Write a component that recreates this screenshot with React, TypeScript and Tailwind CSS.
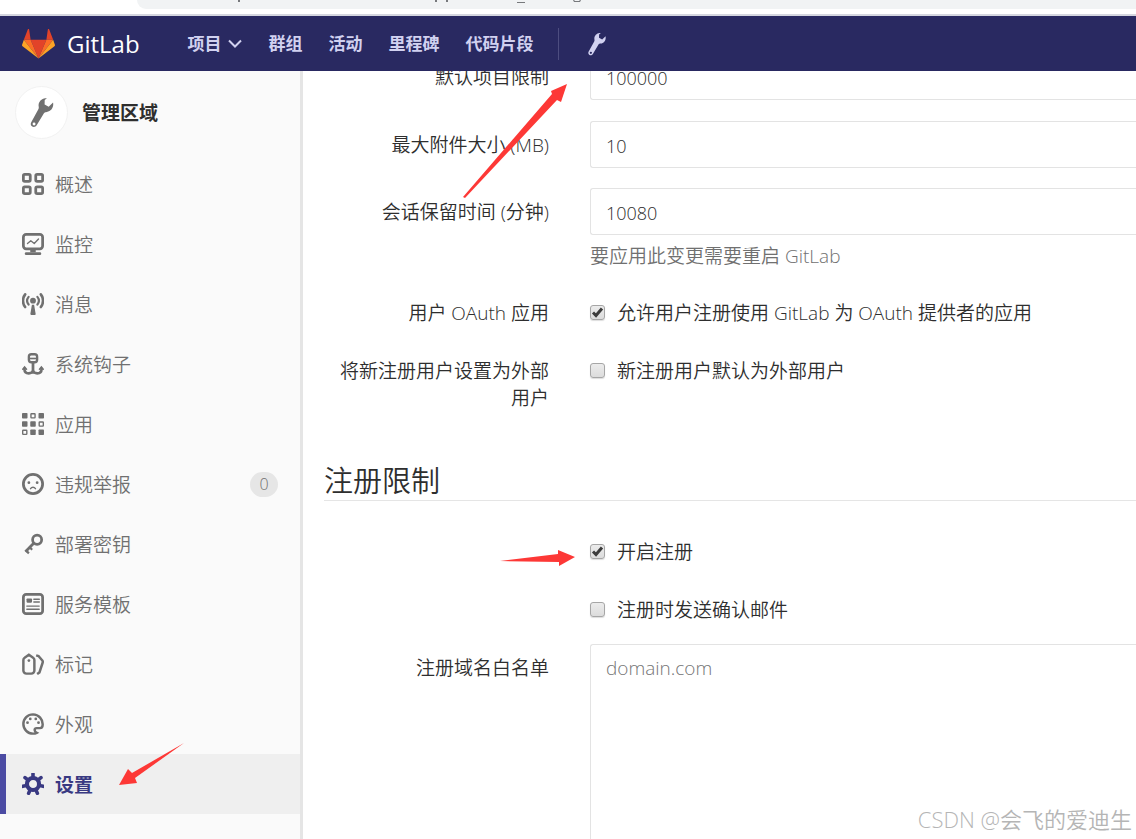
import type { ReactNode } from "react";

interface NavItem {
  label: string;
  icon: ReactNode;
  count?: number;
  active?: boolean;
}

const Wrench = ({ className }: { className: string }) => (
  <svg viewBox="0 0 24 32" className={className} fill="currentColor" aria-hidden="true">
    <path
      fillRule="evenodd"
      d="M15.500 1.200C11.200 1.600 8.100 5.200 8.500 9.400c.2 1.500.4 2.200-.4 3.600L.9 26.100c-1 1.700-.5 3.500 1 4.400 1.600.9 3.600.4 4.600-1.300l7.500-12.400c.7-1.100 1.600-1.200 3-1.400 4.400-.6 7.400-4.700 6.400-9.800l-4.500 4.400-4.200-2.300.1-4.500 2.300-1.900ZM3.800 26.300a1.500 1.500 0 1 1 0 3 1.500 1.500 0 0 1 0-3Z"
    />
  </svg>
);

const Tanuki = () => (
  <svg viewBox="0 0 36 36" className="h-[33px] w-[33px]" aria-hidden="true">
    <path fill="#e24329" d="M2 14h7.400L7.800 2.600c-.2-.7-1.200-.7-1.500 0L2 14Zm32 0h-7.400l1.600-11.400c.2-.7 1.200-.7 1.500 0L34 14Z" />
    <path fill="#e24329" d="M18 34.400 9.400 14h17.200Z" />
    <path fill="#fc6d26" d="M18 34.400 9.400 14H2l16 20.400Zm0 0L26.600 14H34L18 34.400Z" />
    <path fill="#fca326" d="M2 14 .1 19.300a1.400 1.400 0 0 0 .5 1.600L18 34.400 2 14Zm32 0 1.900 5.300a1.400 1.400 0 0 1-.5 1.600L18 34.400 34 14Z" />
  </svg>
);

const Icon = ({ children }: { children: ReactNode }) => (
  <svg
    viewBox="0 0 16 16"
    className="h-[22px] w-[22px] shrink-0"
    fill="none"
    stroke="currentColor"
    strokeWidth="2"
    aria-hidden="true"
  >
    {children}
  </svg>
);

const navItems: NavItem[] = [
  {
    label: "概述",
    icon: (
      <Icon>
        <rect x="1" y="1" width="5" height="5" rx="1" />
        <rect x="10" y="1" width="5" height="5" rx="1" />
        <rect x="1" y="10" width="5" height="5" rx="1" />
        <rect x="10" y="10" width="5" height="5" rx="1" />
      </Icon>
    ),
  },
  {
    label: "监控",
    icon: (
      <Icon>
        <rect x="1" y="1" width="14" height="10.5" rx="2" />
        <path d="M6 13h4" />
        <path d="M3 15h10" strokeLinecap="round" />
        <path d="m4 7.6 2.4-2 2.5 2L12 4.4" strokeWidth="1" strokeLinecap="round" strokeLinejoin="round" />
      </Icon>
    ),
  },
  {
    label: "消息",
    icon: (
      <Icon>
        <circle cx="8" cy="5.6" r="2.1" fill="currentColor" stroke="none" />
        <path d="m7.200 8.600-1.100 6.400c0 .6.400 1 .8 1h2.200c.5 0 .9-.4.8-1l-1.100-6.400Z" fill="currentColor" stroke="none" />
        <path d="M4.800 2.800a4.500 4.500 0 0 0 0 5.600M11.200 2.800a4.500 4.500 0 0 1 0 5.600" strokeWidth="1.6" strokeLinecap="round" />
        <path d="M2.300 1a7.500 7.500 0 0 0 0 9.200M13.700 1a7.500 7.500 0 0 1 0 9.200" strokeWidth="1.900" strokeLinecap="round" />
      </Icon>
    ),
  },
  {
    label: "系统钩子",
    icon: (
      <Icon>
        <rect x="5" y=".9" width="6" height="5.800" rx="1.800" strokeWidth="1.700" />
        <path d="M5 4h6" strokeWidth="1.200" />
        <path d="M8 7v8" />
        <path d="M1.800 10.800v1c0 1.900 1.300 3 3.100 3S8 13.800 8 12.800c0 1 1.300 2 3.100 2s3.100-1.100 3.100-3v-1" strokeWidth="1.900" />
        <path d="m.3 12.200 1.600-2 1.600 2m9 0 1.600-2 1.600 2" strokeWidth="1.200" />
      </Icon>
    ),
  },
  {
    label: "应用",
    icon: (
      <Icon>
        <g fill="currentColor" stroke="none">
          <rect x="0" y="0" width="4" height="4" rx=".6" />
          <rect x="12" y="0" width="4" height="4" rx=".6" />
          <rect x="0" y="6" width="4" height="4" rx=".6" />
          <rect x="6" y="6" width="4" height="4" rx=".6" />
          <rect x="6" y="12" width="4" height="4" rx=".6" />
          <rect x="12" y="12" width="4" height="4" rx=".6" />
        </g>
        <g strokeWidth="1">
          <rect x="6.5" y=".5" width="3" height="3" rx=".4" />
          <rect x="12.5" y="6.5" width="3" height="3" rx=".4" />
          <rect x=".5" y="12.5" width="3" height="3" rx=".4" />
        </g>
      </Icon>
    ),
  },
  {
    label: "违规举报",
    count: 0,
    icon: (
      <Icon>
        <circle cx="8" cy="8" r="7" />
        <circle cx="5" cy="7" r="1" fill="currentColor" stroke="none" />
        <circle cx="11" cy="7" r="1" fill="currentColor" stroke="none" />
        <path d="M6.200 11.400c.9-1.400 2.700-1.400 3.600 0" strokeWidth="1" strokeLinecap="round" />
      </Icon>
    ),
  },
  {
    label: "部署密钥",
    icon: (
      <Icon>
        <circle cx="11" cy="4.900" r="3.300" />
        <path d="m8.500 7.400-6 6.200" />
        <path d="m5.400 10.200 2 2M2.600 12.400l2.400 2.400" strokeWidth="1.600" />
      </Icon>
    ),
  },
  {
    label: "服务模板",
    icon: (
      <Icon>
        <rect x="1" y="1" width="14" height="14" rx="2" />
        <rect x="3.300" y="4" width="4" height="3" rx=".6" fill="currentColor" stroke="none" />
        <path d="M8.600 4.500h4M8.600 6.500h4M3.500 9.500h9M3.500 11.800h9" strokeWidth="1" strokeLinecap="round" />
      </Icon>
    ),
  },
  {
    label: "标记",
    icon: (
      <Icon>
        <path d="M1 5.200v7.300A2.300 2.300 0 0 0 3.300 15h3.400A2.300 2.300 0 0 0 9 12.500V5.200a2 2 0 0 0-.9-1.700L5 1.300 1.900 3.500A2 2 0 0 0 1 5.200Z" strokeWidth="1.800" />
        <circle cx="5" cy="5.500" r="1" fill="currentColor" stroke="none" />
        <path d="M10.300 1.700 12 2.200l2.800 3.300c.4.500.4 1 .2 1.600l-2.300 7-1.700 1.200" strokeWidth="1.800" />
      </Icon>
    ),
  },
  {
    label: "外观",
    icon: (
      <Icon>
        <path d="M8 1a7 7 0 0 0 0 14c1 0 1.900-.2 2.700-.6-.9-.5-1.500-1.400-1.500-2.100 0-.9.700-1.300 1.500-1.300h2.400c1 0 1.900-.9 1.900-2.200A7.200 7.200 0 0 0 8 1Z" strokeWidth="1.800" />
        <g fill="currentColor" stroke="none">
          <circle cx="4" cy="7" r="1" />
          <circle cx="6" cy="4.300" r="1" />
          <circle cx="10" cy="4.300" r="1" />
          <circle cx="12" cy="7" r="1" />
        </g>
      </Icon>
    ),
  },
  {
    label: "设置",
    active: true,
    icon: (
      <Icon>
        <circle cx="8" cy="8" r="4.400" strokeWidth="3" />
        <path
          d="M8 3.500V.5M4.500 5.200 2.200 3.400M11.500 5.200l2.300-1.800M3.700 9 .6 9.700M12.300 9l3.100.7M6 12l-1.200 2.800M10 12l1.200 2.800"
          strokeWidth="2.600"
          strokeLinecap="round"
        />
      </Icon>
    ),
  },
];

const topLinks = ["群组", "活动", "里程碑", "代码片段"];

const Checkbox = ({ id, label, checked }: { id: string; label: string; checked?: boolean }) => (
  <div className="flex items-center gap-3">
    <span className="relative mb-0.5 flex h-[15px] w-[15px]">
      <input
        id={id}
        type="checkbox"
        defaultChecked={checked}
        className="peer h-[15px] w-[15px] appearance-none rounded-[3px] border border-[#a6a6a6] bg-linear-to-b from-[#ececec] to-[#dcdcdc] shadow-[0_1px_1px_#ddd]"
      />
      <svg
        viewBox="0 0 15 15"
        className="pointer-events-none absolute inset-0 hidden peer-checked:block"
        fill="none"
        stroke="#3c3c3c"
        strokeWidth="3"
        aria-hidden="true"
      >
        <path d="m3 7.500 3 3L12 3.500" />
      </svg>
    </span>
    <label htmlFor={id}>{label}</label>
  </div>
);

interface RowProps {
  label?: string;
  htmlFor?: string;
  padded?: boolean;
  className?: string;
  children: ReactNode;
}

const Row = ({ label, htmlFor, padded, className = "", children }: RowProps) => (
  <div className={`flex gap-[41px] ${className}`}>
    <div className={`w-[225px] shrink-0 text-right ${padded ? "pt-[11px]" : ""}`}>
      {label && <label htmlFor={htmlFor}>{label}</label>}
    </div>
    <div className="min-w-0 flex-1">{children}</div>
  </div>
);

const inputClass =
  "block h-[47px] w-full rounded-l-[3px] border border-r-0 border-[#e3e3e3] bg-white px-[15px] pt-0.5 text-lg outline-none";

const Sidebar = () => (
  <aside className="w-[303px] shrink-0 border-r-[3px] border-[#e5e5e5] bg-[#fafafa] text-[#707070]">
    <a href="#admin" className="flex h-[83px] items-center gap-[14px] pl-[15px]">
      <span className="flex h-[53px] w-[53px] items-center justify-center rounded-full border border-[#f2f2f2] bg-white">
        <Wrench className="h-[31px] w-6" />
      </span>
      <span className="pt-0.5 font-bold text-[#2e2e2e]">管理区域</span>
    </a>
    <nav>
      {navItems.map((item) => (
        <a
          key={item.label}
          href={`#${item.label}`}
          className={`flex h-[60px] items-center gap-[11px] pr-[22px] ${
            item.active
              ? "border-l-[6px] border-[#4b4ba3] bg-[#efefef] pl-4 font-bold text-[#393982]"
              : "pl-[22px]"
          }`}
        >
          {item.icon}
          <span className="pt-0.5">{item.label}</span>
          {item.count !== undefined && (
            <span className="ml-auto flex h-[25px] w-7 items-center justify-center rounded-full bg-[#e6e6e6] text-base">
              {item.count}
            </span>
          )}
        </a>
      ))}
    </nav>
  </aside>
);

const TopBar = () => (
  <header className="flex h-[55px] shrink-0 items-center bg-[#292961] pl-[22px] text-[17px] font-bold text-[#d1d1f0]">
    <a href="#home" className="flex items-center gap-3 text-white">
      <Tanuki />
      <span className="text-2xl font-normal">GitLab</span>
    </a>
    <button type="button" className="ml-12 flex items-center gap-[6px]">
      项目
      <svg viewBox="0 0 14 10" className="h-[10px] w-[14px]" fill="none" stroke="currentColor" strokeWidth="2" aria-hidden="true">
        <path d="m1 1.500 6 6 6-6" />
      </svg>
    </button>
    <nav className="ml-[27px] flex gap-[26px]">
      {topLinks.map((link) => (
        <a key={link} href={`#${link}`}>
          {link}
        </a>
      ))}
    </nav>
    <span className="ml-6 h-8 w-px bg-[#4d4d80]" />
    <a href="#admin" aria-label="管理区域" className="ml-[29px]">
      <Wrench className="h-6 w-[18px]" />
    </a>
  </header>
);

const SettingsForm = () => (
  <main className="min-w-0 flex-1 overflow-hidden">
    <form className="-mt-[18px] pl-[21px]">
      <Row label="默认项目限制" htmlFor="projects-limit" padded>
        <input id="projects-limit" defaultValue="100000" className={inputClass} />
      </Row>
      <Row label="最大附件大小 (MB)" htmlFor="attachment-size" padded className="mt-[21px]">
        <input id="attachment-size" defaultValue="10" className={inputClass} />
      </Row>
      <Row label="会话保留时间 (分钟)" htmlFor="session-time" padded className="mt-5">
        <input id="session-time" defaultValue="10080" className={inputClass} />
        <p className="mt-2 text-[#707070]">要应用此变更需要重启 GitLab</p>
      </Row>
      <Row label="用户 OAuth 应用" htmlFor="oauth" className="mt-[30px]">
        <Checkbox id="oauth" label="允许用户注册使用 GitLab 为 OAuth 提供者的应用" checked />
      </Row>
      <Row label="将新注册用户设置为外部用户" htmlFor="external" className="mt-[31px]">
        <Checkbox id="external" label="新注册用户默认为外部用户" />
      </Row>

      <fieldset className="mt-[49px]">
        <legend className="w-full border-b border-[#e5e5e5] text-[29px] leading-[39px]">注册限制</legend>
        <Row className="mt-[38px]">
          <Checkbox id="signup" label="开启注册" checked />
        </Row>
        <Row className="mt-[31px]">
          <Checkbox id="confirm-mail" label="注册时发送确认邮件" />
        </Row>
        <Row label="注册域名白名单" htmlFor="whitelist" padded className="mt-5">
          <textarea
            id="whitelist"
            rows={9}
            placeholder="domain.com"
            className="block w-full resize-none rounded-l-[3px] border border-r-0 border-[#e3e3e3] px-[15px] py-[10px] outline-none placeholder:text-[#757575]"
          />
        </Row>
      </fieldset>
    </form>
  </main>
);

// bottom edge of the browser's address bar
const AddressBar = () => (
  <div className="h-4 shrink-0 border-b-2 border-[#d5d6df] pl-[137px]">
    <div className="h-[9px] overflow-hidden rounded-bl-[12px] bg-[#f1f3f4]">
      <svg viewBox="0 0 460 9" className="h-[9px] w-[460px]" fill="#77797c" aria-hidden="true">
        <path d="M101 0h2v2h-2ZM298 0h2v2h-2ZM309 0h2v2h-2ZM380 2h8v1h-8ZM436 0h1l1 1h4l1-1h1l-1 2h-6Z" />
      </svg>
    </div>
  </div>
);

// red pointer marks drawn over the page
const Arrows = () => (
  <svg viewBox="0 0 1136 839" className="pointer-events-none absolute left-0 top-0 h-[839px] w-[1136px]" fill="#fd3836" aria-hidden="true">
    <path d="M463 197 552 94l-1-3 16-7-6 18-4-2L465 198Z" />
    <path d="m500 561 58-7v-4l17 7-16 9v-4Z" />
    <path d="m184 743-52 30-4-4-9 16 18-2-2-5Z" />
  </svg>
);

export default function App() {
  return (
    <div className="relative flex h-screen flex-col overflow-hidden bg-white font-['Open_Sans','Noto_Sans_CJK_SC',sans-serif] text-[19px] leading-[27px] font-[350] text-[#2e2e2e]">
      <AddressBar />
      <TopBar />
      <div className="flex min-h-0 flex-1">
        <Sidebar />
        <SettingsForm />
      </div>
      <Arrows />
      <div className="absolute right-1 bottom-1 text-[22px] leading-8 text-[#b5b5b5]">CSDN @会飞的爱迪生</div>
    </div>
  );
}
